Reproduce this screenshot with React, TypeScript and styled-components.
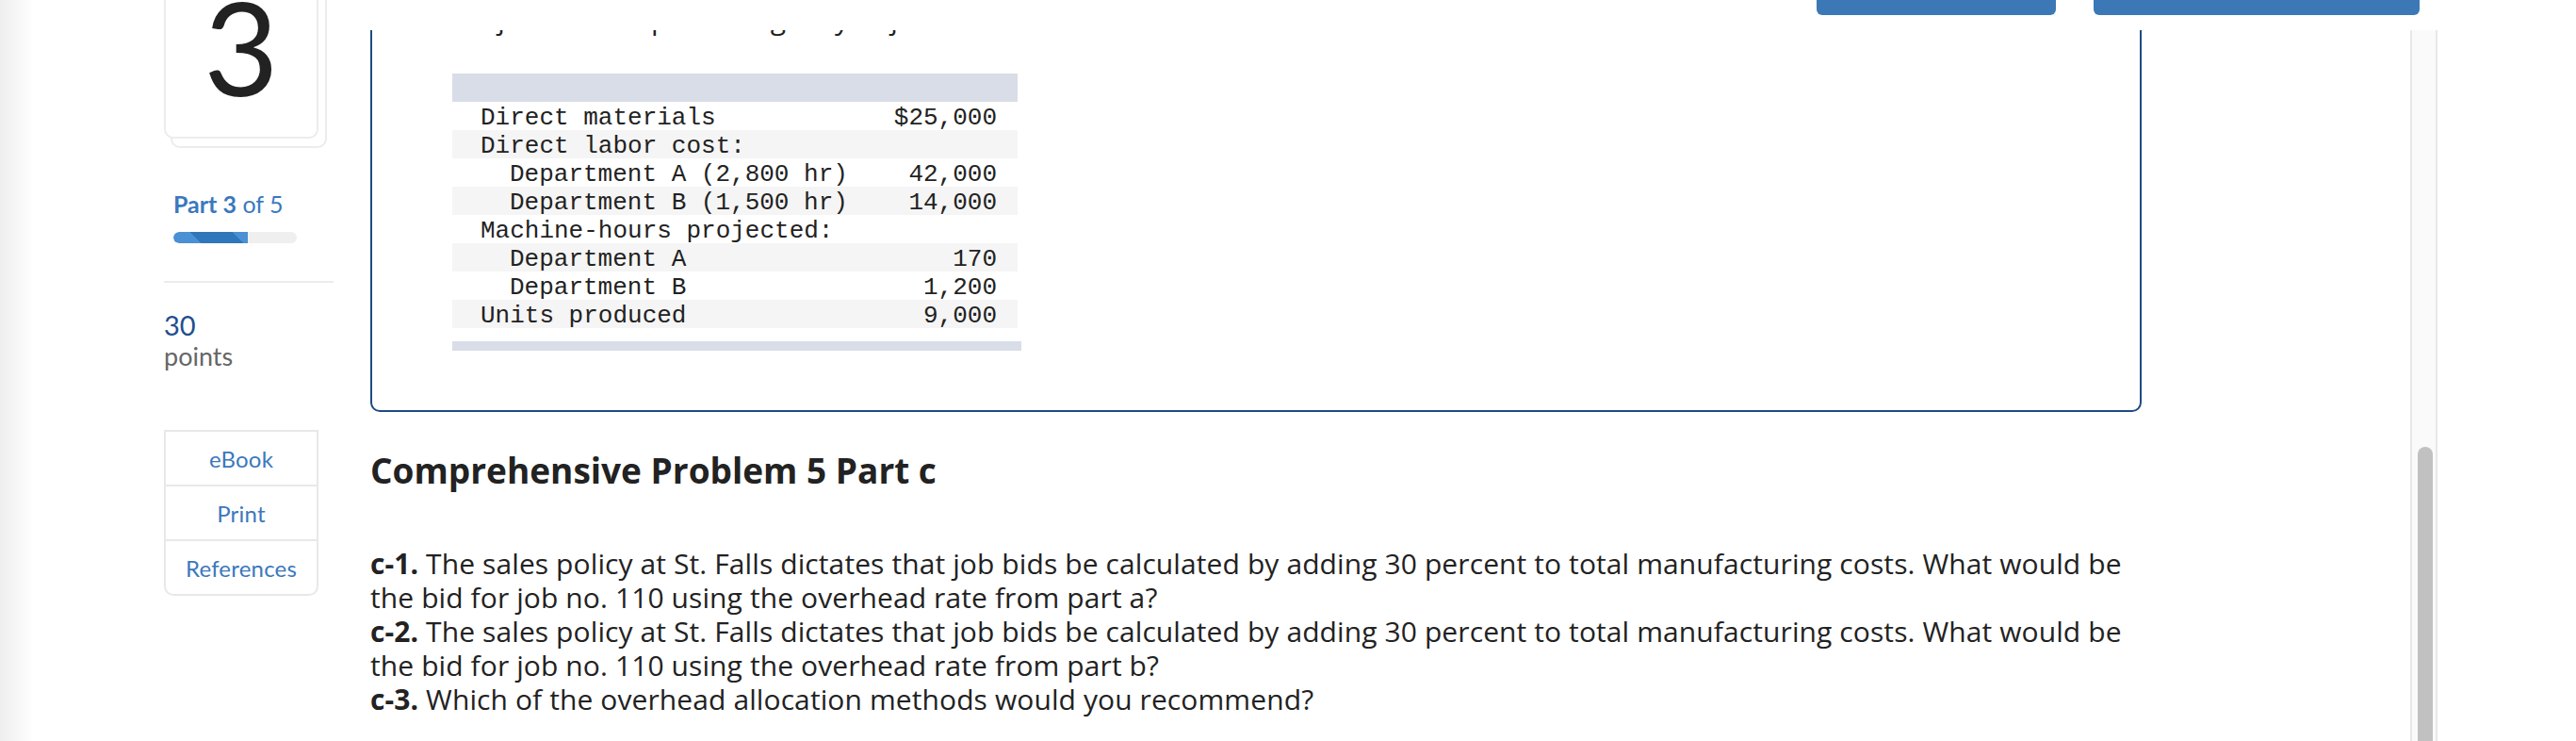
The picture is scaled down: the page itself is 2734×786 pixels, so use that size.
import React from 'react';
import styled, { createGlobalStyle } from 'styled-components';

const GlobalStyle = createGlobalStyle`
    html, body {
        margin: 0;
        padding: 0;
    }
    body {
        background: linear-gradient(to right, #eeeeee 0, #ffffff 36px);
        font-family: Lato, "Noto Sans", "Liberation Sans", sans-serif;
        color: #222;
        overflow: hidden;
    }
`;

const Page = styled.div`
    display: flex;
    height: 786px;
    overflow: hidden;
`;

/* ---------- left sidebar ---------- */

const Sidebar = styled.aside`
    flex: none;
    width: 180px;
    margin-left: 174px;
    display: flex;
    flex-direction: column;
`;

const Stack = styled.div`
    position: relative;
    width: 164px;
    margin-top: -24px;
`;

const NumberCard = styled.div`
    position: relative;
    z-index: 1;
    box-sizing: border-box;
    height: 171px;
    padding-top: 23px;
    border: 2px solid #ececec;
    border-radius: 10px;
    background: #fff;
    text-align: center;
    font-size: 137px;
    line-height: 97px;
    color: #222;
`;

const CardBehind = styled.div`
    position: absolute;
    left: 7px;
    right: -9px;
    top: 10px;
    bottom: -10px;
    border: 2px solid #ececec;
    border-radius: 10px;
    background: #fff;
`;

const PartLabel = styled.div`
    margin-top: 54px;
    padding-left: 10px;
    font-size: 25px;
    line-height: 30px;
    color: #3a78bd;
    b {
        font-weight: 700;
    }
`;

const Progress = styled.div`
    margin: 15px 0 0 10px;
    width: 131px;
    height: 12px;
    border-radius: 6px;
    background: #efefef;
    overflow: hidden;
`;

const ProgressFill = styled.div<{ $pct: number }>`
    width: ${(p) => p.$pct}%;
    height: 100%;
    border-radius: 6px 0 0 6px;
    background: linear-gradient(45deg, #4a90d4 0 21px, #2f76bb 21px 53px, #4a90d4 53px);
`;

const Divider = styled.hr`
    margin: 40px 0 0;
    border: none;
    height: 2px;
    background: #ececec;
`;

const Points = styled.div`
    margin-top: 28px;
    font-size: 29px;
    line-height: 34px;
    color: #1d4f8f;
`;

const PointsLabel = styled.div`
    font-size: 27px;
    line-height: 32px;
    color: #666;
`;

const LinkBox = styled.nav`
    margin-top: 62px;
    width: 164px;
    box-sizing: border-box;
    border: 2px solid #e8e8e8;
    border-radius: 0 0 10px 10px;
`;

const LinkRow = styled.a`
    display: flex;
    align-items: center;
    justify-content: center;
    height: 56px;
    font-size: 24px;
    letter-spacing: 0.2px;
    color: #3b78bc;
    text-decoration: none;
    & + & {
        border-top: 2px solid #e8e8e8;
    }
`;

/* ---------- main column ---------- */

const Main = styled.div`
    flex: none;
    width: 2233px;
    display: flex;
    flex-direction: column;
`;

const TopBar = styled.header`
    flex: none;
    height: 32px;
    display: flex;
    justify-content: flex-end;
    align-items: flex-start;
    gap: 40px;
    padding-right: 19px;
    background: #fff;
`;

const HeaderButton = styled.button<{ $w: number }>`
    width: ${(p) => p.$w}px;
    height: 60px;
    margin-top: -44px;
    border: none;
    border-radius: 6px;
    background: #3c78b6;
    color: #fff;
`;

const Viewport = styled.div`
    flex: 1;
    min-height: 0;
    display: flex;
`;

const Scroller = styled.div`
    flex: 1;
    min-width: 0;
    overflow: hidden;
    padding-left: 39px;
`;

const ScrollContent = styled.div`
    margin-top: -52px;
    width: 1880px;
    font-family: "Open Sans", Lato, "Liberation Sans", sans-serif;
`;

const ScrollTrack = styled.div`
    flex: none;
    width: 29px;
    box-sizing: border-box;
    overflow: hidden;
    border-left: 2px solid #e8e8e8;
    border-right: 2px solid #e8e8e8;
    background: #fafafa;
    padding: 442px 0 0 6px;
`;

const ScrollThumb = styled.div`
    width: 16px;
    height: 600px;
    border-radius: 8px;
    background: #c1c1c1;
`;

const QuestionCard = styled.section`
    box-sizing: border-box;
    border: 2px solid #1f4b82;
    border-radius: 10px;
    padding: 20px 0 63px 85px;
`;

const Lead = styled.p`
    margin: 0 0 40px;
    font-size: 30px;
    line-height: 36px;
`;

const DataBlock = styled.div`
    width: 604px;
`;

const Band = styled.div<{ $h: number; $w: number; $gap?: number }>`
    width: ${(p) => p.$w}px;
    height: ${(p) => p.$h}px;
    margin-top: ${(p) => p.$gap ?? 0}px;
    background: #d8dde7;
`;

const DataTable = styled.table`
    width: 600px;
    border-collapse: collapse;
    border-spacing: 0;
    font-family: "Liberation Mono", "DejaVu Sans Mono", monospace;
    font-size: 26px;
    color: #222;
    tr:nth-child(even) {
        background: #f5f5f5;
    }
`;

const Cell = styled.td<{ $indent?: boolean; $num?: boolean }>`
    box-sizing: border-box;
    height: 30px;
    padding: 4px ${(p) => (p.$num ? '22px' : '0')} 0 ${(p) => (p.$indent ? '61px' : p.$num ? '0' : '30px')};
    line-height: 26px;
    white-space: pre;
    text-align: ${(p) => (p.$num ? 'right' : 'left')};
    vertical-align: top;
`;

const Heading = styled.h2`
    margin: 40px 0 0;
    font-size: 37px;
    line-height: 44px;
    font-weight: 700;
    color: #222;
`;

const Questions = styled.p`
    margin: 59px 0 0;
    font-size: 30px;
    line-height: 36px;
    letter-spacing: 0.1px;
    color: #222;
    b {
        font-weight: 700;
    }
`;

const rows = [
    { label: 'Direct materials', value: '$25,000' },
    { label: 'Direct labor cost:', value: '' },
    { label: 'Department A (2,800 hr)', value: '42,000', indent: true },
    { label: 'Department B (1,500 hr)', value: '14,000', indent: true },
    { label: 'Machine-hours projected:', value: '' },
    { label: 'Department A', value: '170', indent: true },
    { label: 'Department B', value: '1,200', indent: true },
    { label: 'Units produced', value: '9,000' },
];

const App: React.FC = () => {
    return (
        <>
            <GlobalStyle />
            <Page>
                <Sidebar>
                    <Stack>
                        <CardBehind />
                        <NumberCard>3</NumberCard>
                    </Stack>
                    <PartLabel>
                        <b>Part 3</b> of 5
                    </PartLabel>
                    <Progress>
                        <ProgressFill $pct={60} />
                    </Progress>
                    <Divider />
                    <Points>30</Points>
                    <PointsLabel>points</PointsLabel>
                    <LinkBox>
                        <LinkRow href="#">eBook</LinkRow>
                        <LinkRow href="#">Print</LinkRow>
                        <LinkRow href="#">References</LinkRow>
                    </LinkBox>
                </Sidebar>

                <Main>
                    <TopBar>
                        <HeaderButton $w={254} aria-label="Check my work" />
                        <HeaderButton $w={346} aria-label="Submit" />
                    </TopBar>
                    <Viewport>
                        <Scroller>
                            <ScrollContent>
                                <QuestionCard>
                                    <Lead>Projected data pertaining only to job no. 110 are as follows:</Lead>
                                    <DataBlock>
                                        <Band $w={600} $h={30} />
                                        <DataTable>
                                            <tbody>
                                                {rows.map((r) => (
                                                    <tr key={r.label}>
                                                        <Cell $indent={r.indent}>{r.label}</Cell>
                                                        <Cell $num>{r.value}</Cell>
                                                    </tr>
                                                ))}
                                            </tbody>
                                        </DataTable>
                                        <Band $w={604} $h={10} $gap={14} />
                                    </DataBlock>
                                </QuestionCard>

                                <Heading>Comprehensive Problem 5 Part c</Heading>
                                <Questions>
                                    <b>c-1.</b> The sales policy at St. Falls dictates that job bids be calculated by adding 30 percent to total manufacturing costs. What would be
                                    <br />
                                    the bid for job no. 110 using the overhead rate from part a?
                                    <br />
                                    <b>c-2.</b> The sales policy at St. Falls dictates that job bids be calculated by adding 30 percent to total manufacturing costs. What would be
                                    <br />
                                    the bid for job no. 110 using the overhead rate from part b?
                                    <br />
                                    <b>c-3.</b> Which of the overhead allocation methods would you recommend?
                                </Questions>
                            </ScrollContent>
                        </Scroller>
                        <ScrollTrack>
                            <ScrollThumb />
                        </ScrollTrack>
                    </Viewport>
                </Main>
            </Page>
        </>
    );
};

export default App;
